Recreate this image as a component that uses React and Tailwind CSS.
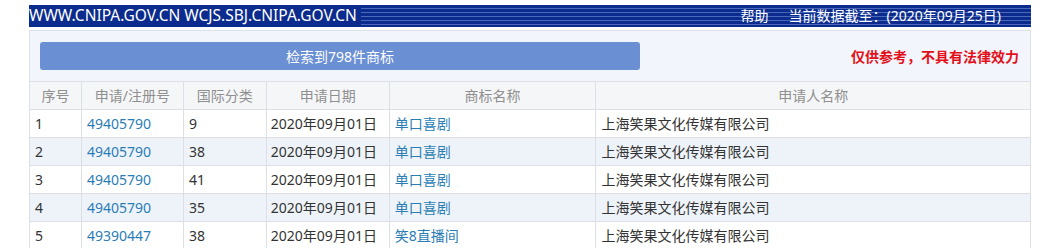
const rows = [
  { no: "1", reg: "49405790", cls: "9", date: "2020年09月01日", name: "单口喜剧", owner: "上海笑果文化传媒有限公司" },
  { no: "2", reg: "49405790", cls: "38", date: "2020年09月01日", name: "单口喜剧", owner: "上海笑果文化传媒有限公司" },
  { no: "3", reg: "49405790", cls: "41", date: "2020年09月01日", name: "单口喜剧", owner: "上海笑果文化传媒有限公司" },
  { no: "4", reg: "49405790", cls: "35", date: "2020年09月01日", name: "单口喜剧", owner: "上海笑果文化传媒有限公司" },
  { no: "5", reg: "49390447", cls: "38", date: "2020年09月01日", name: "笑8直播间", owner: "上海笑果文化传媒有限公司" },
];

const heads = ["序号", "申请/注册号", "国际分类", "申请日期", "商标名称", "申请人名称"];
const widths = ["w-[52px]", "w-[102px]", "w-[83px]", "w-[123px]", "w-[207px]", "w-[435px]"];

function App() {
  return (
    <div className="h-[248px] w-[1048px] overflow-hidden bg-white pt-[5px] font-['Noto_Sans','Noto_Sans_CJK_SC',sans-serif] text-[14px]">
      <div className="ml-[29px] w-[1002px]">
        {/* top bar */}
        <div className="flex h-[22px] items-center bg-[repeating-linear-gradient(to_bottom,#0b2c8e_0px,#0b2c8e_3px,#4a69b8_3px,#4a69b8_4px)] text-white">
          <span className="flex h-full items-center bg-[#0b2c8e] pr-1 text-[15.5px] leading-none">
            WWW.CNIPA.GOV.CN WCJS.SBJ.CNIPA.GOV.CN
          </span>
          <span className="ml-auto text-[14px] leading-none">帮助</span>
          <span className="ml-[20px] mr-[30px] text-[14px] leading-none">当前数据截至：(2020年09月25日)</span>
        </div>

        {/* search info panel */}
        <div className="mt-[3px] flex h-[51px] items-center border-x border-t border-[#dde1e8] bg-[#f2f5fb] pl-[10px] pr-[11px]">
          <div className="flex h-[28px] w-[600px] items-center justify-center rounded-[3px] bg-[#6a8fd3] text-white">
            检索到798件商标
          </div>
          <div className="ml-auto font-bold text-[#e3101a]">仅供参考，不具有法律效力</div>
        </div>

        {/* table */}
        <table className="table-fixed border-collapse text-[#333]">
          <thead>
            <tr className="h-[28px] bg-[#f5f6f8] text-[#8f8f8f]">
              {heads.map((h, i) => (
                <th key={h} className={`${widths[i]} border border-[#dcdfe5] p-0 text-center font-normal`}>
                  {h}
                </th>
              ))}
            </tr>
          </thead>
          <tbody>
            {rows.map((r, i) => (
              <tr key={r.no + r.cls} className={`h-[28px] ${i % 2 === 1 ? "bg-[#eef3fa]" : "bg-white"}`}>
                <td className="border border-[#dcdfe5] pl-[5px]">{r.no}</td>
                <td className="border border-[#dcdfe5] pl-[5px] text-[#2b7db5]">{r.reg}</td>
                <td className="border border-[#dcdfe5] pl-[5px]">{r.cls}</td>
                <td className="border border-[#dcdfe5] pl-[4px]">{r.date}</td>
                <td className="border border-[#dcdfe5] pl-[5px] text-[#2b7db5]">{r.name}</td>
                <td className="border border-[#dcdfe5] pl-[5px]">{r.owner}</td>
              </tr>
            ))}
          </tbody>
        </table>
      </div>
    </div>
  );
}

export default App;
